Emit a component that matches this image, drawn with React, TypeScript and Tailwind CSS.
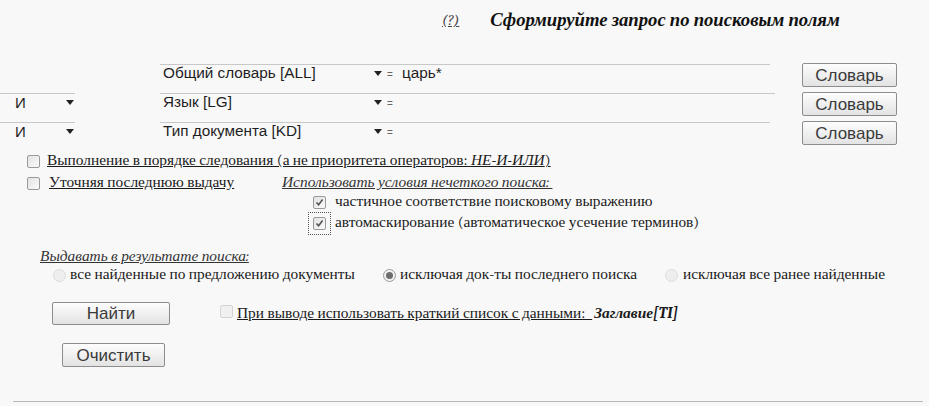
import React from "react";

const Arrow = () => (
  <svg width="8" height="5" viewBox="0 0 8 5" className="shrink-0">
    <path d="M0 0 L8 0 L4 5 Z" fill="#222" />
  </svg>
);

const Checkbox = ({ checked = false, faint = false }: { checked?: boolean; faint?: boolean }) => (
  <span
    className={
      "inline-flex shrink-0 w-[13px] h-[13px] items-center justify-center rounded-[2px] border " +
      (faint ? "border-[#d4d4d4] bg-[#f0f0f0]" : "border-[#9a9a9a] bg-gradient-to-br from-[#e2e2e2] to-[#fbfbfb]")
    }
  >
    {checked && (
      <svg width="9" height="9" viewBox="0 0 9 9">
        <path d="M1.5 4.5 L3.6 6.8 L7.6 1.6" stroke="#555" strokeWidth="1.6" fill="none" />
      </svg>
    )}
  </span>
);

const Radio = ({ checked = false }: { checked?: boolean }) => (
  <span
    className={
      "inline-flex shrink-0 w-[13px] h-[13px] items-center justify-center rounded-full border " +
      (checked ? "border-[#9a9a9a] bg-[#f2f2f2]" : "border-[#dcdcdc] bg-[#eeeeee]")
    }
  >
    {checked && <span className="w-[7px] h-[7px] rounded-full bg-[#6d6d6d]" />}
  </span>
);

const Btn = ({ children, w, h = "h-[24px]" }: { children: React.ReactNode; w: string; h?: string }) => (
  <button
    className={
      w +
      " " +
      h +
      " shrink-0 rounded-[2px] border border-[#8d8d8d] bg-gradient-to-b from-[#fdfdfd] to-[#e3e3e3] text-[17px] text-[#3a3a3a] [font-family:Liberation_Sans,Arial,sans-serif] leading-none flex items-center justify-center"
    }
  >
    {children}
  </button>
);

const QueryRow = ({ op, field, value, lineW }: { op?: string; field: string; value?: string; lineW: string }) => (
  <div className="flex items-start h-[29px]">
    <div className={"w-[75px] h-[18px] flex items-center " + (op ? "border-t border-[#c8c8c8]" : "")}>
      {op && (
        <>
          <span className="pl-[15px] w-[66px] text-[15px] leading-4">{op}</span>
          <Arrow />
        </>
      )}
    </div>
    <div className={"ml-[85px] " + lineW + " border-t border-[#c8c8c8] flex items-center h-[17px]"}>
      <span className="w-[214px] pl-[3px] text-[15.3px] leading-4 whitespace-nowrap">{field}</span>
      <Arrow />
      <span className="ml-[5px] w-[11px] text-[10px] leading-none text-[#666] pt-[4px]">=</span>
      <span className="pl-[4px] text-[15.3px] leading-4">{value}</span>
    </div>
    <div className="flex-1" />
    <div className="mr-[32px] -mt-[1px]">
      <Btn w="w-[95px]">Словарь</Btn>
    </div>
  </div>
);

export default function App() {
  return (
    <div className="w-[929px] h-[406px] overflow-hidden bg-[#f8f8f8] text-[#1e1e1e] [font-family:Liberation_Sans,Arial,sans-serif]">
      {/* header */}
      <div className="flex items-center h-[40px] pl-[442px] font-serif [font-family:Liberation_Serif,Times_New_Roman,serif]">
        <span className="italic underline text-[15px] text-[#444]">(?)</span>
        <span className="ml-[31px] font-bold italic text-[18.7px] text-[#111]">Сформируйте запрос по поисковым полям</span>
      </div>

      {/* query rows */}
      <div className="mt-[24px]">
        <QueryRow field="Общий словарь [ALL]" value="царь*" lineW="w-[610px]" />
        <QueryRow op="И" field="Язык [LG]" lineW="w-[615px]" />
        <QueryRow op="И" field="Тип документа [KD]" lineW="w-[610px]" />
      </div>

      {/* options */}
      <div className="font-serif [font-family:Liberation_Serif,Times_New_Roman,serif] text-[15.4px] text-[#1a1a1a]">
        <div className="flex items-center h-[20px] pl-[27px]">
          <Checkbox />
          <span className="ml-[7px] underline whitespace-nowrap">
            Выполнение в порядке следования (а не приоритета операторов: <i>НЕ-И-ИЛИ</i>)
          </span>
        </div>
        <div className="flex items-center h-[20px] mt-[2px] pl-[27px]">
          <div className="w-[255px] flex items-center">
            <Checkbox />
            <span className="ml-[9px] underline whitespace-nowrap">Уточняя последнюю выдачу</span>
          </div>
          <span className="italic underline whitespace-nowrap text-[#333]">Использовать условия нечеткого поиска:&nbsp;</span>
        </div>
        <div className="flex items-center h-[20px] mt-[-1px] pl-[313px]">
          <Checkbox checked />
          <span className="ml-[9px] whitespace-nowrap">частичное соответствие поисковому выражению</span>
        </div>
        <div className="flex items-center h-[20px] mt-[1px] pl-[313px]">
          <span className="inline-flex outline-1 outline-dotted outline-[#555] outline-offset-[4px]">
            <Checkbox checked />
          </span>
          <span className="ml-[9px] whitespace-nowrap">автомаскирование (автоматическое усечение терминов)</span>
        </div>
        <div className="flex items-center h-[20px] mt-[14px] pl-[40px]">
          <span className="italic underline text-[#333] whitespace-nowrap">Выдавать в результате поиска:</span>
        </div>
        <div className="flex items-center h-[20px] mt-[-2px] pl-[53px]">
          <div className="w-[330px] flex items-center">
            <Radio />
            <span className="ml-[4px] whitespace-nowrap">все найденные по предложению документы</span>
          </div>
          <div className="w-[282px] flex items-center">
            <Radio checked />
            <span className="ml-[4px] whitespace-nowrap">исключая док-ты последнего поиска</span>
          </div>
          <div className="flex items-center">
            <Radio />
            <span className="ml-[5px] whitespace-nowrap">исключая все ранее найденные</span>
          </div>
        </div>
        <div className="flex items-center h-[23px] mt-[17px] pl-[52px]">
          <Btn w="w-[118px]" h="h-[23px]">Найти</Btn>
          <span className="ml-[50px]">
            <Checkbox faint />
          </span>
          <span className="ml-[4px] underline whitespace-nowrap">При выводе использовать краткий список с данными:&nbsp;&nbsp;</span>
          <span className="ml-[2px] font-bold italic whitespace-nowrap">Заглавие[TI]</span>
        </div>
        <div className="flex items-center h-[24px] mt-[18px] pl-[62px]">
          <Btn w="w-[103px]">Очистить</Btn>
        </div>
      </div>

      <div className="mt-[34px] mx-[13px] border-t border-[#b8b8b8] w-[910px]" />
    </div>
  );
}
